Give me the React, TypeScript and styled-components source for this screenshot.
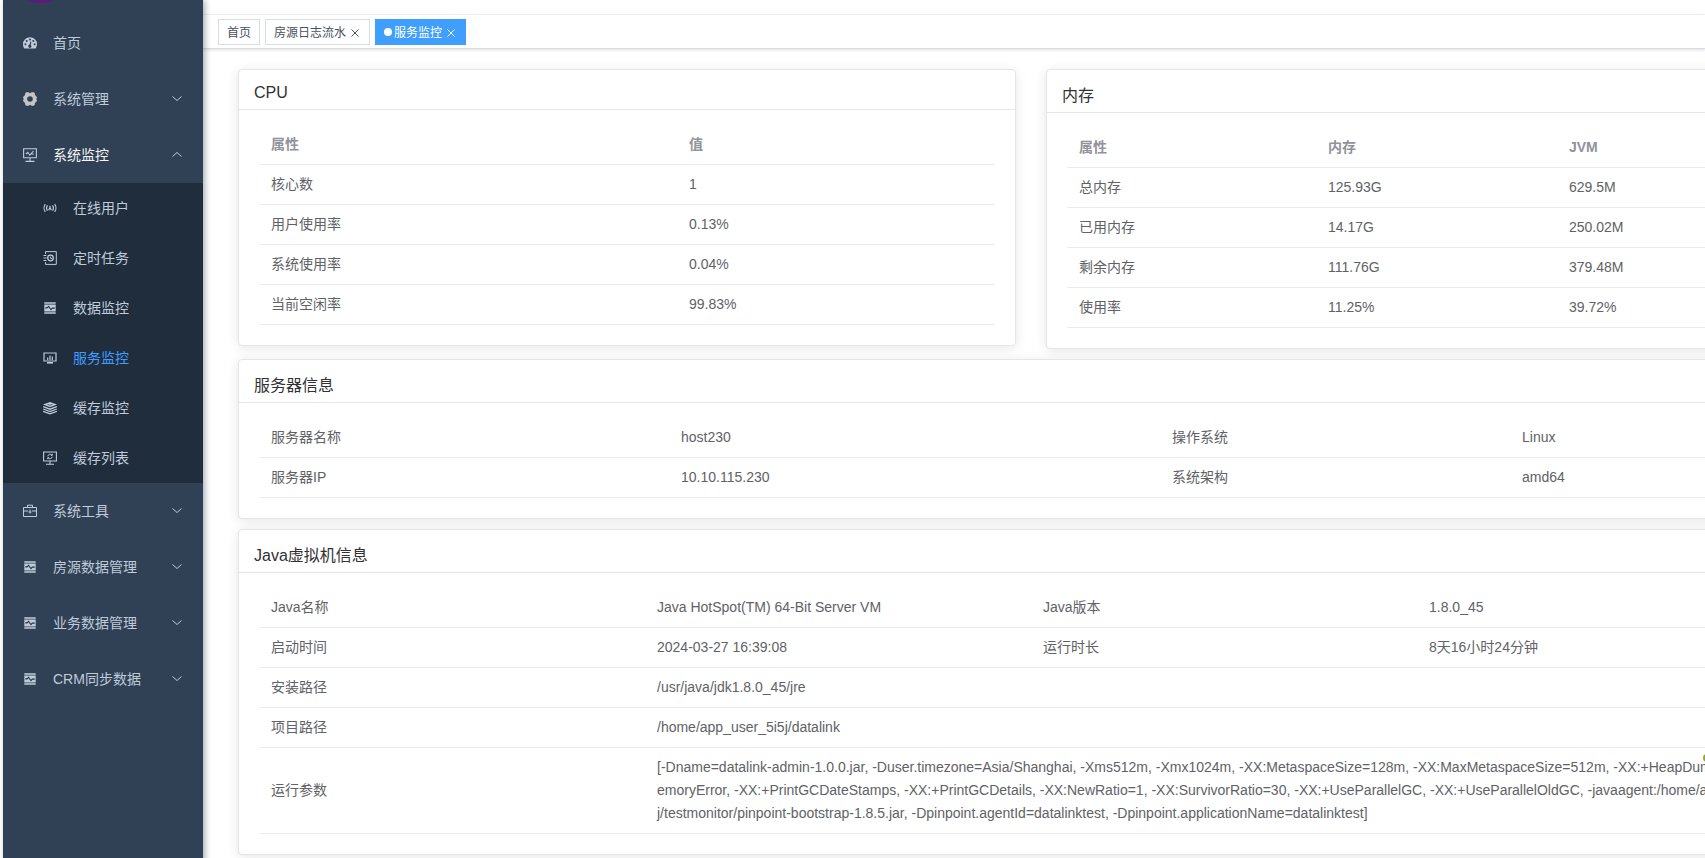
import React from 'react';
import styled, { createGlobalStyle, css } from 'styled-components';

const GlobalStyle = createGlobalStyle`
  *, *::before, *::after { box-sizing: border-box; }
  body {
    margin: 0;
    background: #fff;
    color: #303133;
    font-family: "Liberation Sans", "Noto Sans CJK SC", sans-serif;
    font-size: 14px;
  }
`;

const Page = styled.div`
  position: relative;
  display: flex;
  min-height: 100vh;
  padding-left: 3px;
  overflow: hidden;
`;

const Sidebar = styled.nav`
  position: relative;
  z-index: 1;
  flex: 0 0 200px;
  background: #304156;
  box-shadow: 2px 0 6px rgba(0, 21, 41, 0.35);
`;

const LogoStrip = styled.div`
  height: 15px;
  padding-left: 22px;
  overflow: hidden;
  svg { display: block; }
`;

const MenuList = styled.ul<{ $nested?: boolean }>`
  list-style: none;
  margin: 0;
  padding: 0;
  background: ${(p) => (p.$nested ? '#1f2d3d' : 'transparent')};
`;

const entryStyle = css`
  display: flex;
  align-items: center;
  width: 100%;
  border: 0;
  background: transparent;
  font: inherit;
  text-align: left;
  text-decoration: none;
  cursor: pointer;
  > svg { flex: none; }
`;

const MenuLink = styled.a<{ $nested?: boolean; $active?: boolean }>`
  ${entryStyle}
  gap: 16px;
  height: ${(p) => (p.$nested ? 50 : 56)}px;
  padding: 0 20px 0 ${(p) => (p.$nested ? 40 : 20)}px;
  color: ${(p) => (p.$active ? '#409eff' : '#bfcbd9')};
  > svg { color: #bfcbd9; }
`;

const MenuButton = styled.button<{ $open?: boolean }>`
  ${entryStyle}
  gap: 16px;
  height: 56px;
  padding: 0 20px;
  color: ${(p) => (p.$open ? '#f4f4f5' : '#bfcbd9')};
  > svg { color: #bfcbd9; }
`;

const MenuLabel = styled.span`
  flex: 1;
  padding-bottom: 2px;
  white-space: nowrap;
`;

const Main = styled.div`
  flex: 1;
  min-width: 0;
`;

const Navbar = styled.header`
  height: 15px;
  border-bottom: 1px solid #f6f6f7;
`;

const TagsBar = styled.div`
  display: flex;
  align-items: flex-start;
  gap: 5px;
  height: 34px;
  padding: 4px 15px 0;
  background: #fff;
  border-bottom: 1px solid #d8dce5;
  box-shadow: 0 1px 3px rgba(0, 0, 0, 0.12), 0 0 3px rgba(0, 0, 0, 0.04);
`;

const Tag = styled.a<{ $active?: boolean }>`
  display: flex;
  align-items: center;
  height: 26px;
  padding: 0 8px;
  border: 1px solid ${(p) => (p.$active ? '#409eff' : '#d8dce5')};
  background: ${(p) => (p.$active ? '#409eff' : '#fff')};
  color: ${(p) => (p.$active ? '#fff' : '#495060')};
  font-size: 12px;
  text-decoration: none;
  white-space: nowrap;
`;

const TagLabel = styled.span`
  padding-bottom: 2px;
`;

const TagDot = styled.span`
  width: 8px;
  height: 8px;
  margin-right: 2px;
  border-radius: 50%;
  background: #fff;
`;

const TagClose = styled.button`
  display: flex;
  align-items: center;
  justify-content: flex-end;
  width: 14px;
  height: 16px;
  margin-left: 1px;
  padding: 2px 0 0;
  border: 0;
  background: transparent;
  color: inherit;
  cursor: pointer;
  svg { margin-right: 2px; }
`;

const Content = styled.main`
  min-width: 1656px;
  padding: 20px 35px 0;
`;

const CardRow = styled.div`
  display: grid;
  grid-template-columns: 1fr 1fr;
  gap: 30px;
  align-items: start;
`;

const Card = styled.section`
  margin-bottom: 10px;
  border: 1px solid #e4e6ea;
  border-radius: 4px;
  background: #fff;
  box-shadow: 0 2px 12px rgba(0, 0, 0, 0.1);
`;

const CardTitle = styled.h2<{ $latin?: boolean }>`
  margin: 0;
  padding: ${(p) => (p.$latin ? '14px 15px 7px' : '15px 15px 6px')};
  border-bottom: 1px solid #e4e6ea;
  font-size: 16px;
  font-weight: 400;
  line-height: ${(p) => (p.$latin ? 18 : 21)}px;
`;

const CardBody = styled.div`
  padding: 15px 20px 20px;
`;

const Table = styled.table`
  width: 100%;
  table-layout: fixed;
  border-collapse: separate;
  border-spacing: 0;
  color: #606266;
  line-height: 23px;
`;

const cellStyle = css`
  padding: 8px 12px;
  border-bottom: 1px solid #e8ebf0;
  text-align: left;
  vertical-align: middle;
`;

const HeadCell = styled.th`
  ${cellStyle}
  color: #909399;
  font-weight: 700;
`;

const Cell = styled.td`
  ${cellStyle}
  word-break: break-all;
`;

const FloatingBadge = styled.span`
  position: absolute;
  top: 754px;
  right: -6px;
  width: 8px;
  height: 8px;
  border-radius: 50%;
  background: #8fa832;
`;

type IconName =
  | 'dashboard' | 'gear' | 'monitor' | 'online' | 'job' | 'druid'
  | 'server' | 'redis' | 'redisList' | 'tool';

const glyphs: Record<IconName, React.ReactNode> = {
  dashboard: (
    <>
      <path d="M7 1.2A7 7 0 0 0 0 8.2c0 1.6.5 3 1.300 4.300h11.400A7.700 7.700 0 0 0 14 8.200a7 7 0 0 0-7-7z" fill="currentColor" />
      <g fill="#304156">
        <circle cx="2.400" cy="8.300" r="1" />
        <circle cx="3.700" cy="5" r="1" />
        <circle cx="7" cy="3.500" r="1" />
        <circle cx="10.300" cy="5" r="1" />
        <circle cx="11.600" cy="8.300" r="1" />
        <path d="M7.400 5.400l1 .3-.6 3.200a1.600 1.600 0 1 1-1.200-.3z" />
      </g>
    </>
  ),
  gear: (
    <path
      fill="#c4c4c4"
      fillRule="evenodd"
      d="M3.300.3h2.200L7 1.300 8.500.3h2.200l1 .7.3 2 1.700 1.700.3 1-.8 1.300.8 1.300-.3 1L12 11l-.3 2-1 .7H8.500L7 12.700l-1.500 1H3.300l-1-.7L2 11 .3 9.300 0 8.300.8 7 0 5.700l.3-1L2 3l.3-2zM7 4.200a2.800 2.800 0 1 0 0 5.600 2.800 2.800 0 0 0 0-5.600z"
    />
  ),
  monitor: (
    <g fill="none" stroke="currentColor" strokeWidth="1.100">
      <path d="M.6.7h12.800v9H.6zM7 9.700v3.300M2.500 13.400h9" />
      <path d="M3 6l1.800-1.700 2 2.900L10.500 3M8.500 6h2.300" />
    </g>
  ),
  online: (
    <g fill="none" stroke="currentColor" strokeWidth="1.200">
      <path d="M2.300 3.200C.7 5.300.7 8.700 2.300 10.800M11.700 3.200c1.600 2.100 1.600 5.500 0 7.600M4.400 4.300c-1 1.600-1 3.800 0 5.400M9.600 4.300c1 1.600 1 3.800 0 5.400" />
      <path d="M5.700 9.200L7 6.500l1.300 2.700M7 4.800v2" />
    </g>
  ),
  job: (
    <g fill="none" stroke="currentColor">
      <path d="M2.500 3V.6h10.800v12.800H2.500V11M.5 4.500h3M.5 7h3M.5 9.500h3" />
      <circle cx="7.500" cy="7" r="2.800" strokeWidth="1.300" />
      <path d="M7.500 5.700V7.300H9" />
    </g>
  ),
  druid: (
    <>
      <path d="M1.300 1.300h11.400v1.500H1.300zM1.300 11.200h11.400v1.500H1.300z" fill="currentColor" />
      <path d="M1.300 3.500h11.400v7H1.300z" fill="currentColor" />
      <path d="M2.200 6.900h1.900l1.500-1.500L8 8.700l1.300-1.600h2.500" fill="none" stroke="#26364a" strokeWidth="1.100" />
    </>
  ),
  server: (
    <g fill="none" stroke="currentColor">
      <path d="M1 2h12v8H1z" strokeWidth="1.200" />
      <path d="M4.700 9V6.500M7 9V4.500M9.300 9V5.500" strokeWidth="1.200" />
      <path d="M4 11.800h6" strokeWidth="1.600" />
    </g>
  ),
  redis: (
    <>
      <path d="M7 .9l7 2.700-7 2.700-7-2.700z" fill="currentColor" />
      <path d="M.2 5.600L7 8.200l6.800-2.600M.2 8L7 10.600 13.800 8M.2 10.300L7 12.900l6.800-2.600" fill="none" stroke="currentColor" strokeWidth="1.300" />
      <path d="M4.500 3.400l2.500.9 2.500-.9" fill="none" stroke="#1f2d3d" strokeWidth=".7" />
    </>
  ),
  redisList: (
    <g fill="none" stroke="currentColor">
      <path d="M.6 1h12.800v9H.6zM7 10v3M3 13.300h8" strokeWidth="1.100" />
      <path d="M4.800 5.300a2.300 2.300 0 0 1 4-1.300M9.200 5.700a2.300 2.300 0 0 1-4 1.300M9.300 2.800v1.500H7.800M4.700 8.200V6.700h1.500" />
    </g>
  ),
  tool: (
    <g fill="none" stroke="currentColor">
      <path d="M.5 3.500h13v9H.5zM4.500 3.300V1.200h5v2.100M.5 7h4.500M9 7h4.500M7 5.500v4M5.500 8h3" />
    </g>
  ),
};

const Icon = ({ name }: { name: IconName }) => (
  <svg width="14" height="14" viewBox="0 0 14 14" aria-hidden="true">{glyphs[name]}</svg>
);

const Chevron = ({ up }: { up?: boolean }) => (
  <svg width="12" height="12" viewBox="0 0 12 12" fill="none" stroke="currentColor" aria-hidden="true">
    <path d={up ? 'M1.500 7.500L6 3.500l4.500 4' : 'M1.500 3.500L6 7.500l4.500-4'} />
  </svg>
);

interface MenuEntry {
  label: string;
  icon: IconName;
  leaf?: boolean;
  children?: { label: string; icon: IconName; active?: boolean }[];
}

const menu: MenuEntry[] = [
  { label: '首页', icon: 'dashboard', leaf: true },
  { label: '系统管理', icon: 'gear' },
  {
    label: '系统监控',
    icon: 'monitor',
    children: [
      { label: '在线用户', icon: 'online' },
      { label: '定时任务', icon: 'job' },
      { label: '数据监控', icon: 'druid' },
      { label: '服务监控', icon: 'server', active: true },
      { label: '缓存监控', icon: 'redis' },
      { label: '缓存列表', icon: 'redisList' },
    ],
  },
  { label: '系统工具', icon: 'tool' },
  { label: '房源数据管理', icon: 'druid' },
  { label: '业务数据管理', icon: 'druid' },
  { label: 'CRM同步数据', icon: 'druid' },
];

const tags = [
  { label: '首页' },
  { label: '房源日志流水', closable: true },
  { label: '服务监控', closable: true, active: true },
];

const jvmArgs =
  '[-Dname=datalink-admin-1.0.0.jar, -Duser.timezone=Asia/Shanghai, -Xms512m, -Xmx1024m, -XX:MetaspaceSize=128m, -XX:MaxMetaspaceSize=512m, -XX:+HeapDumpOnOutOfMemoryError, -XX:+PrintGCDateStamps, -XX:+PrintGCDetails, -XX:NewRatio=1, -XX:SurvivorRatio=30, -XX:+UseParallelGC, -XX:+UseParallelOldGC, -javaagent:/home/app_user_5i5j/testmonitor/pinpoint-bootstrap-1.8.5.jar, -Dpinpoint.agentId=datalinktest, -Dpinpoint.applicationName=datalinktest]';

interface InfoCardProps {
  title: string;
  latin?: boolean;
  columns: number[];
  head?: string[];
  rows: string[][];
}

/* A row with fewer cells than columns lets its last cell span the rest. */
const InfoCard = ({ title, latin, columns, head, rows }: InfoCardProps) => (
  <Card>
    <CardTitle $latin={latin}>{title}</CardTitle>
    <CardBody>
      <Table>
        <colgroup>
          {columns.map((width, i) => <col key={i} width={width} />)}
        </colgroup>
        {head && (
          <thead>
            <tr>{head.map((text) => <HeadCell key={text} scope="col">{text}</HeadCell>)}</tr>
          </thead>
        )}
        <tbody>
          {rows.map((row) => (
            <tr key={row[0]}>
              {row.map((text, i) => (
                <Cell key={i} colSpan={i === row.length - 1 ? columns.length - i : 1}>{text}</Cell>
              ))}
            </tr>
          ))}
        </tbody>
      </Table>
    </CardBody>
  </Card>
);

export default function App() {
  return (
    <Page>
      <GlobalStyle />
      <Sidebar>
        <LogoStrip>
          <svg width="32" height="4" viewBox="0 0 32 4" aria-hidden="true">
            <ellipse cx="16" cy="-8" rx="19" ry="11" fill="#5b1a7c" />
          </svg>
        </LogoStrip>
        <MenuList>
          {menu.map((entry) => (
            <li key={entry.label}>
              {entry.leaf ? (
                <MenuLink href="#"><Icon name={entry.icon} /><MenuLabel>{entry.label}</MenuLabel></MenuLink>
              ) : (
                <MenuButton type="button" $open={!!entry.children} aria-expanded={!!entry.children}>
                  <Icon name={entry.icon} />
                  <MenuLabel>{entry.label}</MenuLabel>
                  <Chevron up={!!entry.children} />
                </MenuButton>
              )}
              {entry.children && (
                <MenuList $nested>
                  {entry.children.map((child) => (
                    <li key={child.label}>
                      <MenuLink href="#" $nested $active={child.active}>
                        <Icon name={child.icon} />
                        <MenuLabel>{child.label}</MenuLabel>
                      </MenuLink>
                    </li>
                  ))}
                </MenuList>
              )}
            </li>
          ))}
        </MenuList>
      </Sidebar>
      <Main>
        <Navbar />
        <TagsBar>
          {tags.map((tag) => (
            <Tag key={tag.label} href="#" $active={tag.active}>
              {tag.active && <TagDot />}
              <TagLabel>{tag.label}</TagLabel>
              {tag.closable && (
                <TagClose type="button" aria-label={`关闭${tag.label}`}>
                  <svg width="8" height="8" viewBox="0 0 8 8" stroke="currentColor" aria-hidden="true">
                    <path d="M.5.5l7 7M7.500.5l-7 7" />
                  </svg>
                </TagClose>
              )}
            </Tag>
          ))}
        </TagsBar>
        <Content>
          <CardRow>
            <InfoCard
              title="CPU"
              latin
              columns={[418, 318]}
              head={['属性', '值']}
              rows={[['核心数', '1'], ['用户使用率', '0.13%'], ['系统使用率', '0.04%'], ['当前空闲率', '99.83%']]}
            />
            <InfoCard
              title="内存"
              columns={[249, 241, 246]}
              head={['属性', '内存', 'JVM']}
              rows={[
                ['总内存', '125.93G', '629.5M'],
                ['已用内存', '14.17G', '250.02M'],
                ['剩余内存', '111.76G', '379.48M'],
                ['使用率', '11.25%', '39.72%'],
              ]}
            />
          </CardRow>
          <InfoCard
            title="服务器信息"
            columns={[410, 491, 350, 293]}
            rows={[
              ['服务器名称', 'host230', '操作系统', 'Linux'],
              ['服务器IP', '10.10.115.230', '系统架构', 'amd64'],
            ]}
          />
          <InfoCard
            title="Java虚拟机信息"
            columns={[386, 386, 386, 386]}
            rows={[
              ['Java名称', 'Java HotSpot(TM) 64-Bit Server VM', 'Java版本', '1.8.0_45'],
              ['启动时间', '2024-03-27 16:39:08', '运行时长', '8天16小时24分钟'],
              ['安装路径', '/usr/java/jdk1.8.0_45/jre'],
              ['项目路径', '/home/app_user_5i5j/datalink'],
              ['运行参数', jvmArgs],
            ]}
          />
        </Content>
      </Main>
      <FloatingBadge />
    </Page>
  );
}
